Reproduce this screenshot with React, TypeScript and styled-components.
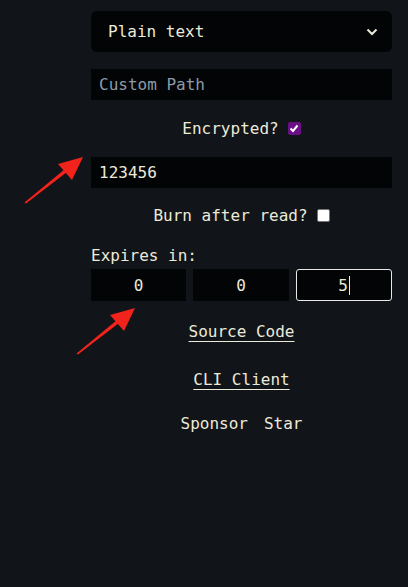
import styled, { createGlobalStyle } from "styled-components";

const GlobalStyle = createGlobalStyle`
  html, body {
    margin: 0;
    padding: 0;
    background: #111419;
  }
  body {
    font-family: "DejaVu Sans Mono", "Liberation Mono", monospace;
    color: #ecead8;
  }
`;

const Page = styled.div`
  position: relative;
  width: 408px;
  height: 587px;
  background: #111419;
  overflow: hidden;
`;

const Form = styled.div`
  display: flex;
  flex-direction: column;
  width: 301px;
  margin-left: 91px;
  padding-top: 11px;
  font-size: 16px;
`;

const Select = styled.div`
  display: flex;
  align-items: center;
  justify-content: space-between;
  height: 41px;
  padding: 0 14px 0 17px;
  background: #030405;
  border-radius: 6px;
  color: #ecead8;
`;

const TextInput = styled.div<{ $placeholder?: boolean }>`
  display: flex;
  align-items: center;
  height: 31px;
  padding: 0 8px;
  margin-top: ${({ $placeholder }) => ($placeholder ? "17px" : "0")};
  background: #030405;
  color: ${({ $placeholder }) => ($placeholder ? "#8a9bab" : "#ecead8")};
`;

const CheckRow = styled.div<{ $top: number; $bottom: number }>`
  display: flex;
  align-items: center;
  justify-content: center;
  gap: 9px;
  height: 20px;
  margin: ${({ $top, $bottom }) => `${$top}px 0 ${$bottom}px`};
`;

const Box = styled.span<{ $checked?: boolean }>`
  display: inline-flex;
  align-items: center;
  justify-content: center;
  width: 13px;
  height: 13px;
  border-radius: 2px;
  background: ${({ $checked }) => ($checked ? "#6b0f86" : "#ffffff")};
  border: 1px solid ${({ $checked }) => ($checked ? "#6b0f86" : "#767676")};
  box-sizing: border-box;
`;

const Label = styled.div`
  height: 20px;
  line-height: 20px;
  margin-top: 21px;
`;

const TimeRow = styled.div`
  display: grid;
  grid-template-columns: 95px 96px 1fr;
  column-gap: 7px;
  margin-top: 3px;
`;

const TimeField = styled.div<{ $focused?: boolean }>`
  display: flex;
  align-items: center;
  justify-content: center;
  height: 32px;
  background: #030405;
  box-sizing: border-box;
  border: ${({ $focused }) => ($focused ? "1px solid #e8e8e8" : "none")};
  border-radius: ${({ $focused }) => ($focused ? "3px" : "0")};
`;

const Caret = styled.span`
  display: inline-block;
  width: 1px;
  height: 19px;
  background: #ecead8;
  margin-left: 1px;
`;

const Links = styled.div`
  display: flex;
  flex-direction: column;
  align-items: center;
  margin-top: 21px;
`;

const LinkText = styled.a<{ $gap: number }>`
  color: #ecead8;
  text-decoration: underline;
  text-underline-offset: 4px;
  text-decoration-thickness: 1px;
  line-height: 20px;
  margin-bottom: ${({ $gap }) => $gap}px;
`;

const Plain = styled.div`
  display: flex;
  gap: 16px;
  line-height: 20px;
`;

const Arrow = styled.svg<{ $x: number; $y: number }>`
  position: absolute;
  left: ${({ $x }) => $x}px;
  top: ${({ $y }) => $y}px;
`;

const RedArrow = ({ x, y }: { x: number; y: number }) => (
  <Arrow $x={x} $y={y} width="64" height="50" viewBox="0 0 64 50">
    <polygon points="1.5,47.5 3,48.5 44,17 42,14" fill="#f2231b" />
    <polygon points="60,2 35,9 49,25" fill="#f2231b" />
  </Arrow>
);

export default function App() {
  return (
    <Page>
      <GlobalStyle />
      <Form>
        <Select>
          <span>Plain text</span>
          <svg width="12" height="8" viewBox="0 0 12 8">
            <path d="M1.5 1.5 L6 6 L10.5 1.5" stroke="#ecead8" strokeWidth="2" fill="none" />
          </svg>
        </Select>
        <TextInput $placeholder>Custom Path</TextInput>
        <CheckRow $top={18} $bottom={19}>
          <span>Encrypted?</span>
          <Box $checked>
            <svg width="10" height="9" viewBox="0 0 10 9">
              <path d="M1.5 4.5 L4 7 L8.5 1.5" stroke="#ffffff" strokeWidth="2" fill="none" />
            </svg>
          </Box>
        </CheckRow>
        <TextInput>123456</TextInput>
        <CheckRow $top={17} $bottom={0}>
          <span>Burn after read?</span>
          <Box />
        </CheckRow>
        <Label>Expires in:</Label>
        <TimeRow>
          <TimeField>0</TimeField>
          <TimeField>0</TimeField>
          <TimeField $focused>
            5<Caret />
          </TimeField>
        </TimeRow>
        <Links>
          <LinkText $gap={28} href="#">Source Code</LinkText>
          <LinkText $gap={24} href="#">CLI Client</LinkText>
          <Plain>
            <span>Sponsor</span>
            <span>Star</span>
          </Plain>
        </Links>
      </Form>
      <RedArrow x={23} y={155} />
      <RedArrow x={75} y={306} />
    </Page>
  );
}
